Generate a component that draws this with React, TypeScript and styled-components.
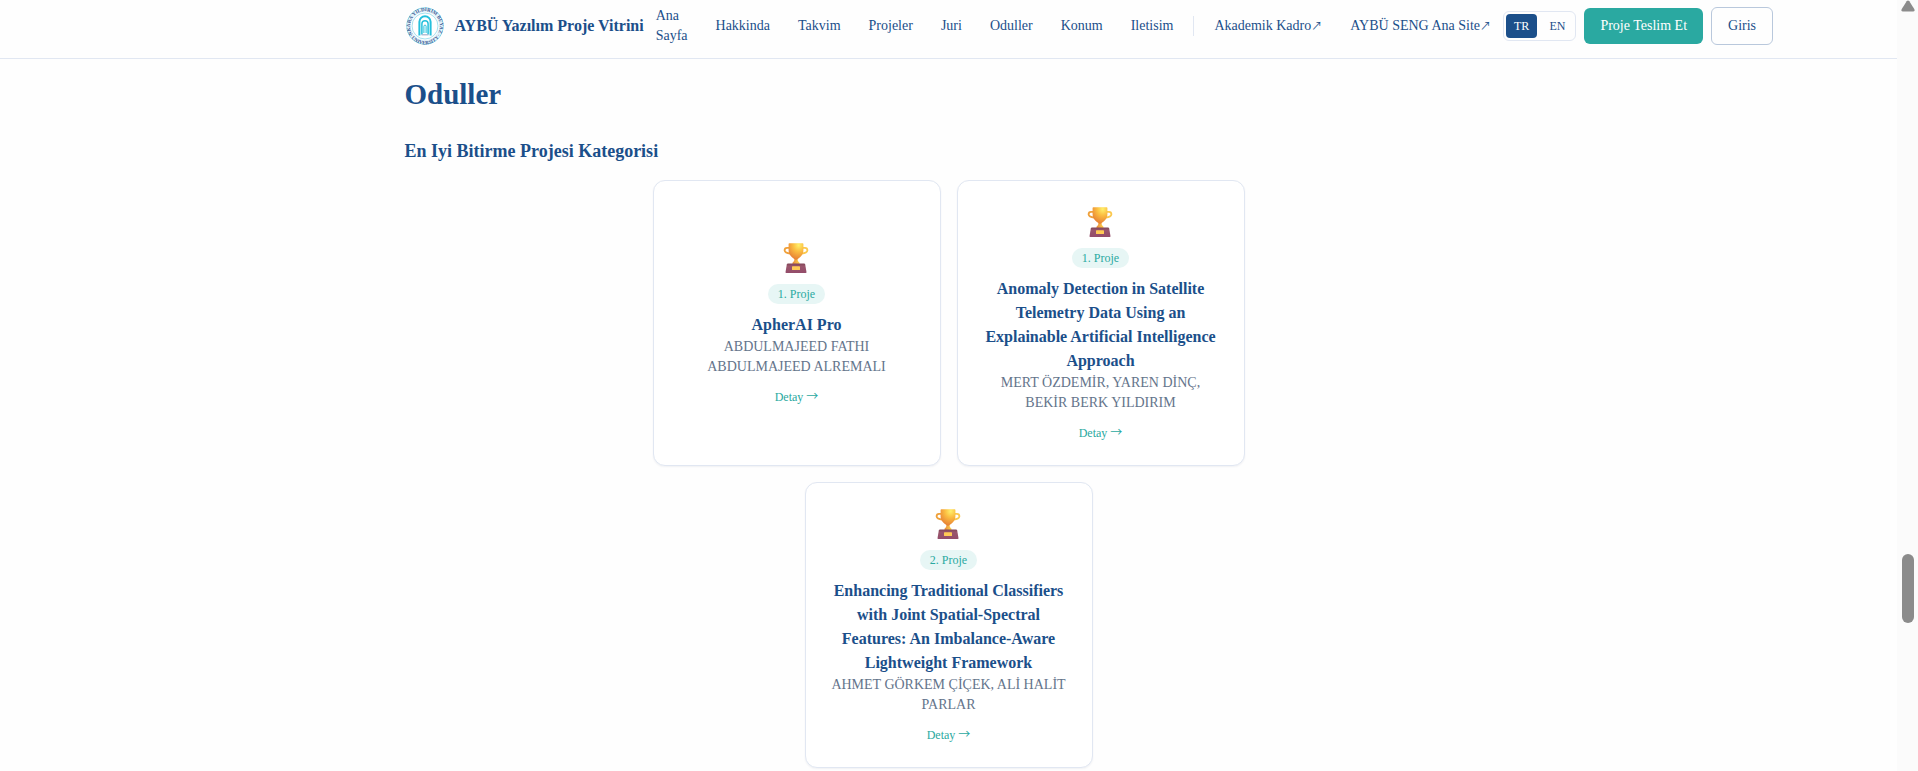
import React from "react";
import styled, { createGlobalStyle, css } from "styled-components";

const color = {
  navy: "#1b4f8a",
  teal: "#2aa9a1",
  tealSoft: "#e7f6f5",
  line: "#e1e7f2",
  outline: "#b9c8dc",
  muted: "#64748b",
  page: "#fefefe",
};

const GlobalStyle = createGlobalStyle`
  *, *::before, *::after { box-sizing: border-box; }
  body {
    margin: 0;
    background: ${color.page};
    color: ${color.navy};
    font-family: "Times New Roman", "Liberation Serif", serif;
    font-size: 16px;
    line-height: 24px;
  }
  h1, h2, h3, p, ul { margin: 0; padding: 0; }
  a { color: inherit; text-decoration: none; }
  button { font: inherit; cursor: pointer; }
`;

const Shell = styled.div`
  display: flex;
  min-height: 100vh;
`;

const Page = styled.div`
  flex: 1;
  min-width: 0;
`;

const Header = styled.header`
  padding: 6px 0 12px;
  border-bottom: 1px solid ${color.line};
`;

const container = css`
  max-width: 1152px;
  margin: 0 auto;
  padding: 0 32px;
`;

const HeaderRow = styled.div`
  ${container}
  display: flex;
  align-items: center;
  gap: 12px;
  height: 40px;
`;

const Brand = styled.a`
  display: flex;
  flex-shrink: 0;
  align-items: center;
  gap: 10px;
  font-weight: 700;
  white-space: nowrap;
`;

const Nav = styled.nav`
  display: flex;
  align-items: center;
  gap: 28px;
  font-size: 14px;
  line-height: 20px;
`;

const NavLink = styled.a<{ $wrap?: boolean }>`
  flex-shrink: 0;
  white-space: ${(p) => (p.$wrap ? "normal" : "nowrap")};
  width: ${(p) => (p.$wrap ? "min-content" : "auto")};
`;

const ExternalLinks = styled.div`
  display: flex;
  flex-shrink: 0;
  align-items: center;
  gap: 28px;
  height: 20px;
  margin-left: -8px;
  padding-left: 20px;
  border-left: 1px solid ${color.line};
`;

const Arrow = styled.span<{ $small?: boolean }>`
  font-family: "Noto Sans CJK JP", sans-serif;
  font-size: ${(p) => (p.$small ? "11px" : "12px")};
  line-height: 1;
`;

const Actions = styled.div`
  display: flex;
  flex-shrink: 0;
  align-items: center;
  gap: 8px;
  font-size: 14px;
  line-height: 20px;
`;

const LanguageSwitch = styled.div`
  display: flex;
  gap: 4px;
  padding: 2px;
  border: 1px solid ${color.line};
  border-radius: 6px;
`;

const LanguageButton = styled.button<{ $active?: boolean }>`
  padding: 4px 8px;
  border: 0;
  border-radius: 4px;
  background: ${(p) => (p.$active ? color.navy : "transparent")};
  color: ${(p) => (p.$active ? "#fff" : color.navy)};
  font-size: 12px;
  line-height: 16px;
`;

const ActionButton = styled.button<{ $primary?: boolean }>`
  padding: 8px 16px;
  border: ${(p) => (p.$primary ? "0" : `1px solid ${color.outline}`)};
  border-radius: 6px;
  background: ${(p) => (p.$primary ? color.teal : "transparent")};
  color: ${(p) => (p.$primary ? "#fff" : color.navy)};
  white-space: nowrap;
`;

const Content = styled.main`
  ${container}
  padding-top: 15px;
`;

const PageTitle = styled.h1`
  font-size: 29px;
  line-height: 40px;
`;

const CategoryTitle = styled.h2`
  margin-top: 25px;
  font-size: 18px;
  line-height: 24px;
`;

const CardList = styled.ul`
  display: flex;
  flex-wrap: wrap;
  justify-content: center;
  gap: 16px;
  max-width: 768px;
  margin: 17px auto 0;
  list-style: none;
`;

const Card = styled.li`
  display: flex;
  flex-direction: column;
  align-items: center;
  justify-content: center;
  width: 288px;
  padding: 24px;
  border: 1px solid ${color.line};
  border-radius: 12px;
  background: #fff;
  box-shadow: 0 1px 2px rgba(15, 40, 90, 0.06);
  text-align: center;
`;

const Badge = styled.span`
  margin: 7px 0 9px;
  padding: 2px 10px;
  border-radius: 10px;
  background: ${color.tealSoft};
  color: ${color.teal};
  font-size: 12px;
  line-height: 16px;
`;

const ProjectTitle = styled.h3`
  font-size: 16px;
  line-height: 24px;
`;

const Authors = styled.p`
  color: ${color.muted};
  font-size: 14px;
  line-height: 20px;
`;

const DetailLink = styled.a`
  margin-top: 12px;
  color: ${color.teal};
  font-size: 12px;
  line-height: 16px;
`;

const ScrollTrack = styled.div`
  display: grid;
  flex-shrink: 0;
  grid-template-rows: 554fr 69fr 148fr;
  justify-items: center;
  width: 21px;
  height: 100vh;
  padding-left: 1px;
  background: #fbfbfb;
`;

const ScrollThumb = styled.div`
  width: 12px;
  border-radius: 6px;
  background: #8b8b8b;
`;

const Seal = styled.svg`
  flex-shrink: 0;
  overflow: visible;
`;

function ScrollBar() {
  return (
    <ScrollTrack aria-hidden="true">
      <svg width="14" height="12" viewBox="0 0 14 12">
        <path d="M5.7 1.3Q7-.5 8.3 1.3L13.4 9.3Q14 11.4 12 11.5H2Q0 11.4.6 9.3Z" fill="#8b8b8b" />
      </svg>
      <ScrollThumb />
    </ScrollTrack>
  );
}

function Logo() {
  return (
    <Seal width="40" height="40" viewBox="0 0 40 40" aria-hidden="true">
      <defs>
        <path id="sealTop" d="M7.1 27.5A14.9 14.9 0 1 1 32.9 27.5" />
        <path id="sealBottom" d="M3.5 27.5A18 18 0 0 0 36.5 27.5" />
      </defs>
      <circle cx="20" cy="20" r="18.2" fill="#fff" stroke="#7fd3e9" strokeWidth="1" />
      <circle cx="20" cy="20" r="15.8" fill="none" stroke="#e3f1f9" strokeWidth="3.4" />
      <circle cx="20" cy="20" r="13" fill="none" stroke="#8ed8ea" strokeWidth=".8" />
      <g fill="#3b5791" fontSize="5" fontWeight="700" textAnchor="middle">
        <text>
          <textPath href="#sealTop" startOffset="50%">ANKARA YILDIRIM BEYAZIT</textPath>
        </text>
        <text>
          <textPath href="#sealBottom" startOffset="50%">· UNIVERSITY ·</textPath>
        </text>
      </g>
      <g fill="none" stroke="#25c0dc">
        <path d="M14.4 29.4V15.8A5.6 5.6 0 0 1 25.6 15.8V29.4" strokeWidth="2" />
        <path d="M16.9 28.5V17.8A3.1 3.1 0 0 1 23.1 17.8V28.5" strokeWidth="1.5" />
        <path d="M18.9 27V20.2A1.1 1.1 0 0 1 21.1 20.2V27" strokeWidth="1" />
      </g>
      <path d="M16.5 28.8H23.5" stroke="#a4b2cd" strokeWidth="1.2" />
    </Seal>
  );
}

function Trophy() {
  return (
    <svg width="36" height="36" viewBox="0 0 36 36" aria-hidden="true">
      <defs>
        <radialGradient id="cup" cx=".68" cy=".12" r=".85">
          <stop offset="0" stopColor="#fff06b" />
          <stop offset=".45" stopColor="#fbbd41" />
          <stop offset="1" stopColor="#e88436" />
        </radialGradient>
        <linearGradient id="stem" x1="0" x2="1" y1="0" y2="0">
          <stop offset="0" stopColor="#e78a3a" />
          <stop offset="1" stopColor="#ffd34e" />
        </linearGradient>
        <linearGradient id="base" x1="0" x2="0" y1="0" y2="1">
          <stop offset="0" stopColor="#824558" />
          <stop offset=".3" stopColor="#9a566c" />
          <stop offset="1" stopColor="#934c6a" />
        </linearGradient>
      </defs>
      <g fill="none" strokeWidth="1.8">
        <path d="M10.5 6.8H8Q5.6 6.8 5.6 9.3Q6 12 11.2 12.5" stroke="#efa039" />
        <path d="M23.5 6.8H26Q28.4 6.8 28.4 9.3Q28 12 22.8 12.5" stroke="#fbc84d" />
      </g>
      <path d="M15.6 17H18.4Q18.3 20.2 20.5 21.7V23H13.5V21.7Q15.7 20.2 15.6 17Z" fill="url(#stem)" />
      <path d="M10.4 2.2H23.6Q24.4 2.2 24.4 3V9.5C24.4 14 20.8 16.4 17.8 18.7H16.2C13.2 16.4 9.6 14 9.6 9.5V3Q9.6 2.2 10.4 2.2Z" fill="url(#cup)" />
      <path d="M9 22.6H25Q26 22.6 26.2 23.4L27.5 31.2Q27.6 32 26.7 32H7.3Q6.4 32 6.5 31.2L7.8 23.4Q8 22.6 9 22.6Z" fill="url(#base)" />
      <rect x="13" y="25.2" width="8" height="3.8" rx=".6" fill="#ffca55" />
    </svg>
  );
}

const sections = ["Hakkinda", "Takvim", "Projeler", "Juri", "Oduller", "Konum", "Iletisim"];

const projects = [
  { rank: "1. Proje", title: "ApherAI Pro", authors: "ABDULMAJEED FATHI ABDULMAJEED ALREMALI" },
  {
    rank: "1. Proje",
    title: "Anomaly Detection in Satellite Telemetry Data Using an Explainable Artificial Intelligence Approach",
    authors: "MERT ÖZDEMİR, YAREN DİNÇ, BEKİR BERK YILDIRIM",
  },
  {
    rank: "2. Proje",
    title: "Enhancing Traditional Classifiers with Joint Spatial-Spectral Features: An Imbalance-Aware Lightweight Framework",
    authors: "AHMET GÖRKEM ÇİÇEK, ALİ HALİT PARLAR",
  },
];

export default function App() {
  return (
    <>
      <GlobalStyle />
      <Shell>
        <Page>
          <Header>
            <HeaderRow>
              <Brand href="#top">
                <Logo />
                AYBÜ Yazılım Proje Vitrini
              </Brand>
              <Nav>
                <NavLink href="#top" $wrap>Ana Sayfa</NavLink>
                {sections.map((name) => (
                  <NavLink key={name} href={`#${name.toLowerCase()}`}>{name}</NavLink>
                ))}
                <ExternalLinks>
                  <NavLink href="#kadro">Akademik Kadro<Arrow $small>↗</Arrow></NavLink>
                  <NavLink href="#seng">AYBÜ SENG Ana Site<Arrow $small>↗</Arrow></NavLink>
                </ExternalLinks>
              </Nav>
              <Actions>
                <LanguageSwitch role="group" aria-label="Dil">
                  <LanguageButton type="button" $active aria-pressed="true">TR</LanguageButton>
                  <LanguageButton type="button" aria-pressed="false">EN</LanguageButton>
                </LanguageSwitch>
                <ActionButton type="button" $primary>Proje Teslim Et</ActionButton>
                <ActionButton type="button">Giris</ActionButton>
              </Actions>
            </HeaderRow>
          </Header>
          <Content id="oduller">
            <PageTitle>Oduller</PageTitle>
            <CategoryTitle>En Iyi Bitirme Projesi Kategorisi</CategoryTitle>
            <CardList>
              {projects.map((project) => (
                <Card key={project.title}>
                  <Trophy />
                  <Badge>{project.rank}</Badge>
                  <ProjectTitle>{project.title}</ProjectTitle>
                  <Authors>{project.authors}</Authors>
                  <DetailLink href="#detay">Detay <Arrow>→</Arrow></DetailLink>
                </Card>
              ))}
            </CardList>
          </Content>
        </Page>
        <ScrollBar />
      </Shell>
    </>
  );
}
